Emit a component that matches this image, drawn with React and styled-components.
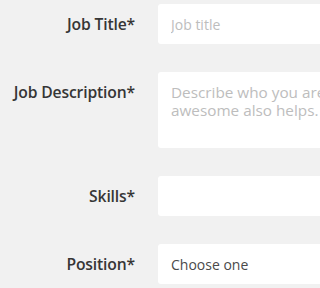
import React from "react";
import styled, { createGlobalStyle } from "styled-components";

const Global = createGlobalStyle`
  html, body { margin: 0; padding: 0; background: #f1f1f1; }
  body { font-family: "Open Sans", "Liberation Sans", sans-serif; }
`;

const Page = styled.div`
  width: 100vw;
  height: 100vh;
  overflow: hidden;
`;

const Form = styled.form`
  width: 470px;
  padding-top: 4px;
  display: flex;
  flex-direction: column;
  gap: 28px;
`;

const Row = styled.div`
  display: grid;
  grid-template-columns: 135px 1fr;
  column-gap: 23px;
  align-items: start;
`;

const Label = styled.label`
  text-align: right;
  font-size: 15.7px;
  letter-spacing: -0.15px;
  font-weight: 600;
  color: #363636;
  line-height: 40px;
  white-space: nowrap;
`;

const fieldBase = `
  box-sizing: border-box;
  width: 100%;
  border: none;
  border-radius: 3px;
  background: #fff;
  font-family: "Open Sans", "Liberation Sans", sans-serif;
  font-size: 14px;
  color: #4a4a4a;
  outline: none;
  padding: 0 13px;
  margin: 0;
  &::placeholder { color: #bdbdbd; }
`;

const Input = styled.input`
  ${fieldBase}
  height: 40px;
`;

const TextArea = styled.textarea`
  ${fieldBase}
  display: block;
  height: 76px;
  font-size: 15.3px;
  padding-top: 11px;
  line-height: 18px;
  resize: none;
`;

const Select = styled.div`
  ${fieldBase}
  height: 40px;
  display: flex;
  align-items: center;
`;

export default function App() {
  return (
    <Page>
      <Global />
      <Form>
        <Row>
          <Label>Job Title*</Label>
          <Input placeholder="Job title" />
        </Row>
        <Row>
          <Label>Job Description*</Label>
          <TextArea placeholder="Describe who you are looking for. Being awesome also helps." />
        </Row>
        <Row>
          <Label>Skills*</Label>
          <Input />
        </Row>
        <Row>
          <Label>Position*</Label>
          <Select>Choose one</Select>
        </Row>
      </Form>
    </Page>
  );
}
